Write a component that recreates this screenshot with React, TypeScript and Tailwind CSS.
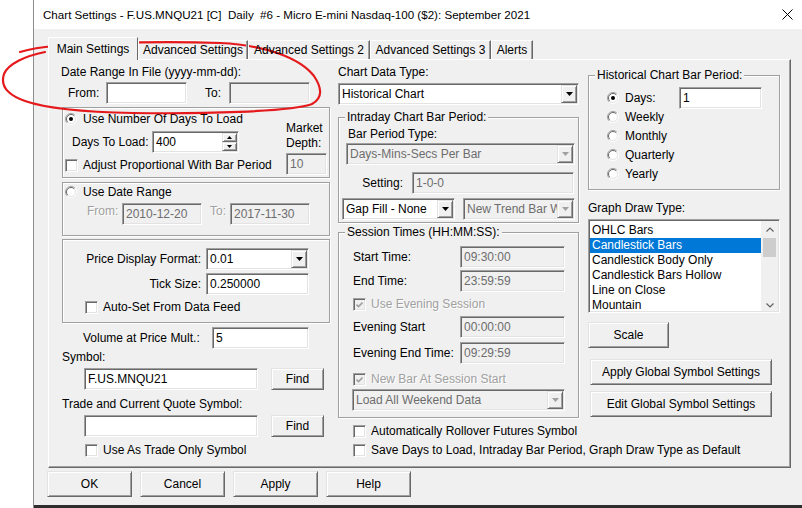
import React from 'react';

// classic 3D edges
const sunken =
  'border border-t-[#a0a0a0] border-l-[#a0a0a0] border-r-white border-b-white shadow-[inset_1px_1px_0_#696969,inset_-1px_-1px_0_#e3e3e3]';
const raised =
  'border border-t-[#e3e3e3] border-l-[#e3e3e3] border-r-[#696969] border-b-[#696969] shadow-[inset_1px_1px_0_#fff,inset_-1px_-1px_0_#a0a0a0]';
const etched = 'border border-[#a0a0a0] shadow-[inset_1px_1px_0_#fff,1px_1px_0_#fff]';
const dimText = 'text-[#a0a0a0] [text-shadow:1px_1px_0_#fff]';

type BoxProps = { value?: string; className?: string; disabled?: boolean };

function TextBox({ value = '', className = '', disabled }: BoxProps) {
  return (
    <div
      className={`${sunken} ${
        disabled ? 'bg-[#f0f0f0] text-[#6d6d6d]' : 'bg-white'
      } flex items-center pl-[3px] whitespace-nowrap overflow-hidden shrink-0 ${className}`}
    >
      {value}
    </div>
  );
}

function Arrow({ color = '#000' }: { color?: string }) {
  return (
    <svg width="7" height="4" viewBox="0 0 7 4">
      <path d="M0 0h7L3.5 4z" fill={color} />
    </svg>
  );
}

function Combo({ value = '', className = '', disabled }: BoxProps) {
  return (
    <div
      className={`${sunken} ${
        disabled ? 'bg-[#f0f0f0] text-[#6d6d6d]' : 'bg-white'
      } flex items-stretch p-[1px] shrink-0 ${className}`}
    >
      <span className="flex-1 flex items-center pl-[2px] whitespace-nowrap overflow-hidden">{value}</span>
      <span className={`${raised} w-[16px] bg-[#f0f0f0] flex items-center justify-center shrink-0`}>
        <Arrow color={disabled ? '#a0a0a0' : '#000'} />
      </span>
    </div>
  );
}

function Spin({ value }: { value: string }) {
  return (
    <div className={`${sunken} bg-white w-[87px] h-[22px] flex p-[1px] shrink-0`}>
      <span className="flex-1 flex items-center pl-[2px]">{value}</span>
      <span className="w-[15px] flex flex-col">
        <span className={`${raised} flex-1 bg-[#f0f0f0] flex items-center justify-center`}>
          <svg width="5" height="3" viewBox="0 0 5 3">
            <path d="M0 3h5L2.5 0z" fill="#000" />
          </svg>
        </span>
        <span className={`${raised} flex-1 bg-[#f0f0f0] flex items-center justify-center`}>
          <svg width="5" height="3" viewBox="0 0 5 3">
            <path d="M0 0h5L2.5 3z" fill="#000" />
          </svg>
        </span>
      </span>
    </div>
  );
}

function Btn({ label, className = '' }: { label: string; className?: string }) {
  return (
    <div className={`${raised} bg-[#f0f0f0] flex items-center justify-center shrink-0 whitespace-nowrap ${className}`}>
      {label}
    </div>
  );
}

type ToggleProps = { label: string; checked?: boolean; disabled?: boolean; className?: string };

function Check({ label, checked, disabled, className = '' }: ToggleProps) {
  return (
    <div className={`flex items-center h-[14px] ${className}`}>
      <span
        className={`${sunken} w-[13px] h-[13px] ${
          disabled ? 'bg-[#f0f0f0]' : 'bg-white'
        } flex items-center justify-center shrink-0`}
      >
        {checked && (
          <svg width="7" height="7" viewBox="0 0 7 7">
            <path d="M0.5 3.5L2.5 5.5L6.5 1.5" fill="none" stroke={disabled ? '#a0a0a0' : '#000'} strokeWidth="1.6" />
          </svg>
        )}
      </span>
      <span className={`ml-[5px] whitespace-nowrap ${disabled ? dimText : ''}`}>{label}</span>
    </div>
  );
}

function Radio({ label, checked, className = '' }: ToggleProps) {
  return (
    <div className={`flex items-center h-[14px] shrink-0 ${className}`}>
      <svg width="12" height="12" viewBox="0 0 12 12" className="shrink-0">
        <circle cx="6" cy="6" r="5" fill="#fff" />
        <path d="M2.1 9.9A5.5 5.5 0 0 1 9.9 2.1" fill="none" stroke="#a0a0a0" />
        <path d="M9.9 2.1A5.5 5.5 0 0 1 2.1 9.9" fill="none" stroke="#fff" />
        <path d="M2.8 9.2A4.5 4.5 0 0 1 9.2 2.8" fill="none" stroke="#696969" />
        <path d="M9.2 2.8A4.5 4.5 0 0 1 2.8 9.2" fill="none" stroke="#e3e3e3" />
        {checked && <circle cx="6" cy="6" r="2" fill="#000" />}
      </svg>
      <span className="ml-[6px] whitespace-nowrap">{label}</span>
    </div>
  );
}

function SessionRow({ label, value, className = '' }: { label: string; value: string; className?: string }) {
  return (
    <div className={`h-[22px] flex items-center ${className}`}>
      <span className="ml-[14px] w-[107px] whitespace-nowrap">{label}</span>
      <TextBox disabled value={value} className="w-[105px] h-[22px]" />
    </div>
  );
}

function Chevron({ up }: { up?: boolean }) {
  return (
    <svg width="8" height="5" viewBox="0 0 8 5">
      <path d={up ? 'M0.5 4.5L4 1L7.5 4.5' : 'M0.5 0.5L4 4L7.5 0.5'} fill="none" stroke="#606060" strokeWidth="1.2" />
    </svg>
  );
}

const tabs = [
  { name: 'Advanced Settings', w: 'w-[110px]' },
  { name: 'Advanced Settings 2', w: 'w-[122px]' },
  { name: 'Advanced Settings 3', w: 'w-[121px]' },
  { name: 'Alerts', w: 'w-[42px]' },
];

const drawTypes = [
  'OHLC Bars',
  'Candlestick Bars',
  'Candlestick Body Only',
  'Candlestick Bars Hollow',
  'Line on Close',
  'Mountain',
];

export default function App() {
  return (
    <div className="relative w-[802px] h-[508px] flex bg-white overflow-hidden font-['Liberation_Sans',Arial,sans-serif] text-[12px] leading-[14px] text-black">
      <div className="w-[33px] shrink-0 bg-white" />

      <div className="flex-1 flex flex-col border-l border-[#8c8c8c] min-w-0">
        {/* title bar */}
        <div className="h-[29px] shrink-0 bg-white flex items-center pl-[9px] pr-[9px]">
          <span className="flex-1 whitespace-pre text-[11.6px]">
            Chart Settings - F.US.MNQU21 [C]  Daily  #6 - Micro E-mini Nasdaq-100 ($2): September 2021
          </span>
          <svg width="11" height="11" viewBox="0 0 11 11">
            <path d="M0.5 0.5L10.5 10.5M10.5 0.5L0.5 10.5" stroke="#000" strokeWidth="1" />
          </svg>
        </div>

        <div className="flex-1 bg-[#f0f0f0] pl-[14px] pt-[8px]">
          {/* tab strip */}
          <div className="h-[22px] flex items-end relative z-10">
            <div className="w-[90px] h-[23px] -mb-[1px] bg-[#f0f0f0] border-t border-l border-t-white border-l-white border-r border-r-[#696969] flex items-center justify-center">
              Main Settings
            </div>
            {tabs.map((t) => (
              <div
                key={t.name}
                className={`${t.w} h-[19px] border-t border-l border-t-white border-l-white border-r border-r-[#696969] shadow-[inset_-1px_0_0_#a0a0a0] flex items-center justify-center whitespace-nowrap`}
              >
                {t.name}
              </div>
            ))}
          </div>

          {/* tab page */}
          <div className="w-[743px] h-[409px] border border-t-white border-l-white border-r-[#696969] border-b-[#696969] shadow-[inset_-1px_-1px_0_#a0a0a0] flex pl-[13px]">
            {/* left column */}
            <div className="w-[268px] shrink-0 flex flex-col pt-[5px]">
              <div className="h-[14px] -ml-px whitespace-nowrap">Date Range In File (yyyy-mm-dd):</div>
              <div className="mt-[3px] h-[22px] flex items-center">
                <span className="ml-[6px] w-[38px]">From:</span>
                <TextBox className="w-[81px] h-[22px]" />
                <span className="ml-[18px] w-[24px]">To:</span>
                <TextBox disabled className="w-[81px] h-[22px]" />
              </div>

              <div className={`${etched} mt-[3px] h-[71px] flex`}>
                <div className="w-[223px] shrink-0 flex flex-col pt-[4px]">
                  <Radio checked label="Use Number Of Days To Load" className="ml-[2px]" />
                  <div className="mt-[5px] h-[22px] flex items-center">
                    <span className="ml-[9px] w-[80px] whitespace-nowrap">Days To Load:</span>
                    <Spin value="400" />
                  </div>
                  <Check label="Adjust Proportional With Bar Period" className="mt-[5px] ml-[2px]" />
                </div>
                <div className="flex flex-col pt-[13px]">
                  <div className="leading-[15px]">
                    Market
                    <br />
                    Depth:
                  </div>
                  <TextBox disabled value="10" className="mt-[2px] w-[41px] h-[22px]" />
                </div>
              </div>

              <div className={`${etched} mt-[4px] h-[54px] flex flex-col pt-[2px]`}>
                <Radio label="Use Date Range" className="ml-[2px]" />
                <div className="mt-[4px] h-[22px] flex items-start">
                  <span className={`ml-[24px] w-[35px] mt-[1px] ${dimText}`}>From:</span>
                  <TextBox disabled value="2010-12-20" className="w-[80px] h-[22px]" />
                  <span className={`ml-[8px] w-[20px] mt-[1px] ${dimText}`}>To:</span>
                  <TextBox disabled value="2017-11-30" className="w-[80px] h-[22px]" />
                </div>
              </div>

              <div className={`${etched} mt-[3px] h-[84px] flex flex-col pt-[8px]`}>
                <div className="h-[22px] flex items-center">
                  <span className="w-[138px] text-right whitespace-nowrap">Price Display Format:</span>
                  <Combo value="0.01" className="ml-[5px] w-[103px] h-[22px]" />
                </div>
                <div className="mt-[3px] h-[22px] flex items-center">
                  <span className="w-[138px] text-right">Tick Size:</span>
                  <TextBox value="0.250000" className="ml-[5px] w-[103px] h-[22px]" />
                </div>
                <Check label="Auto-Set From Data Feed" className="mt-[5px] ml-[22px]" />
              </div>

              <div className="mt-[4px] h-[22px] flex items-center">
                <span className="ml-[21px] w-[129px] whitespace-nowrap">Volume at Price Mult.:</span>
                <TextBox value="5" className="w-[97px] h-[22px]" />
              </div>
              <div className="mt-[1px] h-[14px]">Symbol:</div>
              <div className="mt-[4px] h-[22px] flex items-center">
                <TextBox value="F.US.MNQU21" className="ml-[22px] w-[174px] h-[22px]" />
                <Btn label="Find" className="ml-[13px] w-[53px] h-[22px]" />
              </div>
              <div className="mt-[7px] h-[14px] whitespace-nowrap">Trade and Current Quote Symbol:</div>
              <div className="mt-[4px] h-[22px] flex items-center">
                <TextBox className="ml-[22px] w-[174px] h-[22px]" />
                <Btn label="Find" className="ml-[13px] w-[53px] h-[22px]" />
              </div>
              <Check label="Use As Trade Only Symbol" className="mt-[6px] ml-[23px]" />
            </div>

            {/* middle column */}
            <div className="ml-[8px] w-[241px] shrink-0 flex flex-col pt-[5px]">
              <div className="h-[14px]">Chart Data Type:</div>
              <Combo value="Historical Chart" className="mt-[4px] w-[241px] h-[22px]" />

              <fieldset className={`${etched} mt-[5px] h-[113px] min-w-0`}>
                <legend className="ml-[6px] px-[2px] bg-[#f0f0f0] leading-[14px]">Intraday Chart Bar Period:</legend>
                <div className="flex flex-col pt-[3px]">
                  <div className="h-[14px] ml-[9px]">Bar Period Type:</div>
                  <Combo disabled value="Days-Mins-Secs Per Bar" className="mt-[2px] ml-[7px] w-[229px] h-[22px]" />
                  <div className="mt-[7px] h-[22px] flex items-center">
                    <span className="w-[64px] text-right">Setting:</span>
                    <TextBox disabled value="1-0-0" className="ml-[9px] w-[162px] h-[22px]" />
                  </div>
                  <div className="mt-[4px] h-[22px] flex items-center">
                    <Combo value="Gap Fill - None" className="ml-[3px] w-[113px] h-[22px]" />
                    <Combo disabled value="New Trend Bar Width" className="ml-[8px] w-[112px] h-[22px]" />
                  </div>
                </div>
              </fieldset>

              <fieldset className={`${etched} mt-[2px] h-[193px] min-w-0`}>
                <legend className="ml-[6px] px-[2px] bg-[#f0f0f0] leading-[14px]">Session Times (HH:MM:SS):</legend>
                <div className="flex flex-col pt-[7px]">
                  <SessionRow label="Start Time:" value="09:30:00" />
                  <SessionRow label="End Time:" value="23:59:59" className="mt-[2px]" />
                  <Check disabled checked label="Use Evening Session" className="mt-[5px] ml-[14px]" />
                  <SessionRow label="Evening Start" value="00:00:00" className="mt-[5px]" />
                  <SessionRow label="Evening End Time:" value="09:29:59" className="mt-[4px]" />
                  <Check disabled checked label="New Bar At Session Start" className="mt-[8px] ml-[14px]" />
                  <Combo disabled value="Load All Weekend Data" className="mt-[3px] ml-[13px] w-[213px] h-[22px]" />
                </div>
              </fieldset>

              <Check label="Automatically Rollover Futures Symbol" className="mt-[6px] ml-[15px]" />
              <Check
                label="Save Days to Load, Intraday Bar Period, Graph Draw Type as Default"
                className="mt-[5px] ml-[15px]"
              />
            </div>

            {/* right column */}
            <div className="ml-[9px] w-[192px] shrink-0 flex flex-col pt-[8px]">
              <fieldset className={`${etched} h-[122px] min-w-0`}>
                <legend className="ml-[6px] px-[2px] bg-[#f0f0f0] leading-[14px]">Historical Chart Bar Period:</legend>
                <div className="flex flex-col pt-[6px]">
                  <div className="h-[19px] flex items-center">
                    <Radio checked label="Days:" className="ml-[18px] w-[72px]" />
                    <TextBox value="1" className="w-[83px] h-[22px]" />
                  </div>
                  <Radio label="Weekly" className="h-[19px] ml-[18px]" />
                  <Radio label="Monthly" className="h-[19px] ml-[18px]" />
                  <Radio label="Quarterly" className="h-[19px] ml-[18px]" />
                  <Radio label="Yearly" className="h-[19px] ml-[18px]" />
                </div>
              </fieldset>

              <div className="mt-[11px] h-[14px]">Graph Draw Type:</div>
              <div className={`${sunken} mt-[4px] bg-white h-[94px] flex p-[1px]`}>
                <div className="flex-1 flex flex-col pt-[2px] overflow-hidden">
                  {drawTypes.map((d) => (
                    <div
                      key={d}
                      className={`h-[15px] leading-[15px] pl-[2px] whitespace-nowrap ${
                        d === 'Candlestick Bars' ? 'bg-[#0078d7] text-white' : ''
                      }`}
                    >
                      {d}
                    </div>
                  ))}
                </div>
                <div className="w-[17px] bg-[#f0f0f0] flex flex-col">
                  <div className="h-[17px] flex items-center justify-center">
                    <Chevron up />
                  </div>
                  <div className="h-[19px] mx-[2px] bg-[#cdcdcd]" />
                  <div className="flex-1" />
                  <div className="h-[17px] flex items-end justify-center pb-[3px]">
                    <Chevron />
                  </div>
                </div>
              </div>

              <Btn label="Scale" className="mt-[9px] w-[81px] h-[26px]" />
              <Btn label="Apply Global Symbol Settings" className="mt-[11px] ml-[2px] w-[182px] h-[26px]" />
              <Btn label="Edit Global Symbol Settings" className="mt-[6px] ml-[2px] w-[182px] h-[26px]" />
            </div>
          </div>

          {/* dialog buttons */}
          <div className="mt-[3px] -ml-px flex gap-[8px]">
            <Btn label="OK" className="w-[85px] h-[26px]" />
            <Btn label="Cancel" className="w-[85px] h-[26px]" />
            <Btn label="Apply" className="w-[85px] h-[26px]" />
            <Btn label="Help" className="w-[85px] h-[26px]" />
          </div>
        </div>

        <div className="h-[3px] shrink-0 bg-[#2e2e2e]" />
      </div>

      {/* hand-drawn red marker around the date range */}
      <svg className="absolute left-0 top-0 pointer-events-none" width="802" height="508" viewBox="0 0 802 508">
        <path
          d="M20 52 C30 49, 42 47, 55 46 C100 43, 160 41, 220 43 C265 45, 300 58, 314 76 C322 88, 323 98, 312 104 C290 112, 200 114, 133 113 C80 112, 45 108, 25 101 C8 95, 0 86, 4 74 C8 64, 25 56, 45 52"
          fill="none"
          stroke="#e5191b"
          strokeWidth="2.2"
          strokeLinecap="round"
          strokeLinejoin="round"
        />
      </svg>
    </div>
  );
}
